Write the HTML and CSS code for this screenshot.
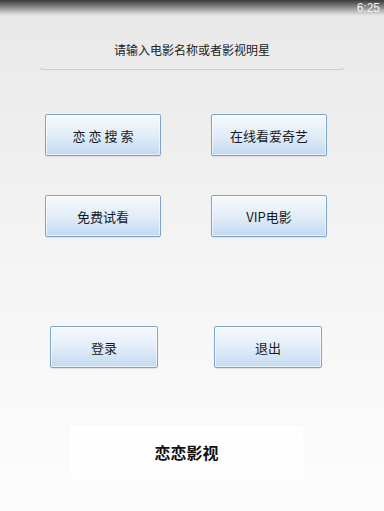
FILE: index.html
```html
<!DOCTYPE html>
<html lang="zh-CN">
  <head>
    <meta charset="UTF-8">
    <meta name="viewport" content="width=device-width, initial-scale=1.0">
    <title>恋恋影视</title>
    <link rel="stylesheet" href="styles.css">
  </head>
  <body>
    <div class="status-bar">
      <span class="time">6:25</span>
    </div>
    <main>
      <div class="search-box">
        <label class="hint">请输入电影名称或者影视明星</label>
        <div class="underline"></div>
      </div>
      <div class="btn-row row-top">
        <button class="btn wide spaced">恋恋搜索</button>
        <button class="btn wide">在线看爱奇艺</button>
      </div>
      <div class="btn-row row-mid">
        <button class="btn wide">免费试看</button>
        <button class="btn wide">VIP电影</button>
      </div>
      <div class="btn-row row-login">
        <button class="btn small">登录</button>
        <button class="btn small">退出</button>
      </div>
      <div class="brand">恋恋影视</div>
    </main>
  </body>
</html>
```

FILE: styles.css
```css
html, body {
  margin: 0;
  height: 100%;
}
body {
  width: 384px;
  height: 511px;
  overflow: hidden;
  font-family: "Liberation Sans", "Noto Sans CJK SC", sans-serif;
  background: linear-gradient(to bottom, #e8e8e8, #f4f4f4 50%, #fdfdfd);
  color: #222;
}
.status-bar {
  height: 16px;
  display: flex;
  justify-content: flex-end;
  align-items: center;
  padding-right: 4px;
  background: linear-gradient(to bottom, #3a3a3a, #8a8a8a 45%, #dcdcdc 90%, #e8e8e8);
}
.time {
  color: #f4f4f4;
  font-size: 12px;
  line-height: 16px;
}
.search-box {
  margin-top: 27px;
  display: flex;
  flex-direction: column;
  align-items: center;
}
.hint {
  font-size: 12px;
  line-height: 16px;
  color: #222;
}
.underline {
  margin-top: 8px;
  width: 302px;
  height: 3px;
  border: 1px solid #cfcfcf;
  border-top: 0;
  box-sizing: border-box;
}
.btn-row {
  display: flex;
}
.row-top {
  margin-top: 44px;
  padding-left: 45px;
  gap: 50px;
}
.row-mid {
  margin-top: 39px;
  padding-left: 45px;
  gap: 50px;
}
.row-login {
  margin-top: 89px;
  padding-left: 50px;
  gap: 56px;
}
.btn {
  height: 42px;
  padding: 0;
  border: 1px solid #7ea6cc;
  border-radius: 2px;
  background: linear-gradient(to bottom, #f6f9fd, #e2edf8 50%, #c3daf0);
  box-shadow: inset 0 0 0 1px rgba(255, 255, 255, 0.6), 0 1px 1px rgba(0, 0, 0, 0.08);
  font-family: "Noto Sans CJK SC", sans-serif;
  font-size: 13px;
  color: #1a1a1a;
}
.wide {
  width: 116px;
}
.small {
  width: 108px;
}
.spaced {
  letter-spacing: 3px;
  padding-left: 3px;
}
.brand {
  margin: 58px 0 0 70px;
  width: 233px;
  height: 52px;
  background: #fefefe;
  display: flex;
  justify-content: center;
  align-items: center;
  font-family: "Noto Sans CJK SC", sans-serif;
  font-size: 16px;
  font-weight: bold;
  color: #111;
}
```
